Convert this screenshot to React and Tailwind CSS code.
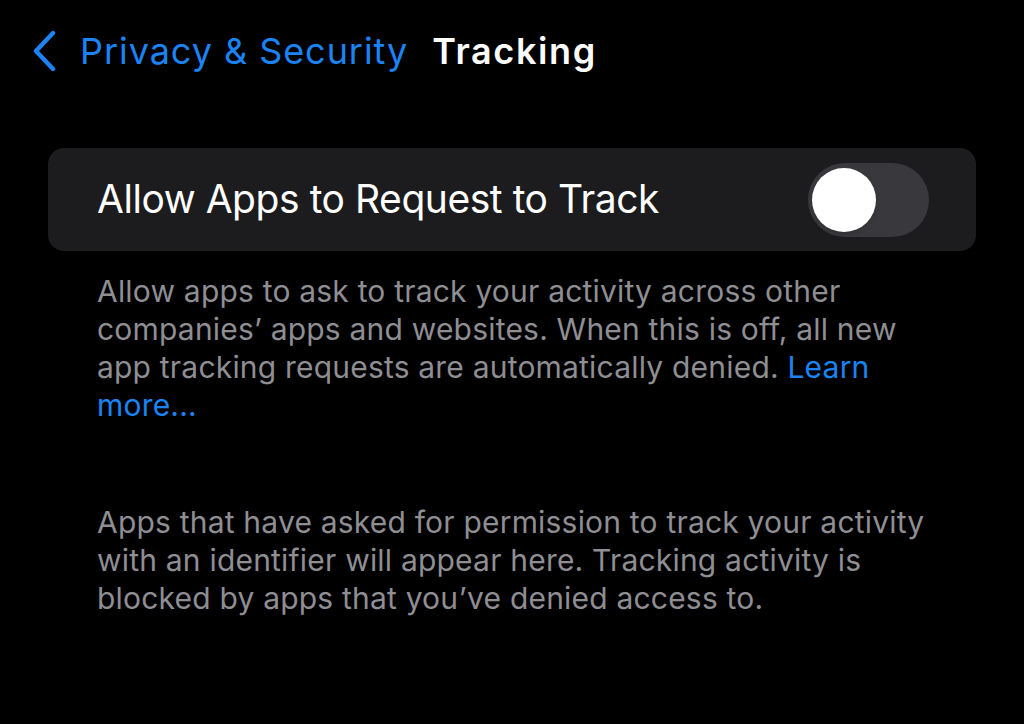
import React, { useState } from 'react'

export default function App() {
  const [allowTracking, setAllowTracking] = useState(false)

  return (
    <div className="min-h-[724px] w-[1024px] bg-black text-white font-['Inter',sans-serif] overflow-hidden">
      {/* Nav bar */}
      <header className="flex items-center h-[104px] pl-[31px] pb-[2px]">
        <button className="flex items-center text-[#1a84f5]">
          <svg width="28" height="42" viewBox="0 0 28 42" fill="none" className="mr-[21px]">
            <path d="M22 3 L5 21 L22 39" stroke="currentColor" strokeWidth="4.4" strokeLinecap="round" strokeLinejoin="round" />
          </svg>
          <span className="text-[36px] tracking-[0.95px]">Privacy &amp; Security</span>
        </button>
        <h1 className="ml-[24px] text-[36px] font-semibold tracking-[1.6px]">Tracking</h1>
      </header>

      <main className="px-[48px] pt-[44px]">
        {/* Toggle row */}
        <div className="flex items-center justify-between h-[103px] rounded-[16px] bg-[#1c1c1e] pl-[49px] pr-[47px]">
          <span className="text-[39px] tracking-[-0.45px]">Allow Apps to Request to Track</span>
          <button
            onClick={() => setAllowTracking(!allowTracking)}
            className={`relative h-[74px] w-[121px] rounded-full ${allowTracking ? 'bg-[#30d158]' : 'bg-[#39393d]'}`}
          >
            <span className={`absolute top-[5px] h-[64px] w-[64px] rounded-full bg-white shadow-md ${allowTracking ? 'left-[52px]' : 'left-[4px]'}`} />
          </button>
        </div>

        <p className="pl-[49px] pr-[31px] pt-[21px] text-[30px] leading-[38px] text-[#8e8e93] tracking-[0.2px]">
          Allow apps to ask to track your activity across other companies’ apps and websites. When this is off, all new app tracking requests are automatically denied. <span className="text-[#1a84f5]">Learn more...</span>
        </p>

        <p className="pl-[49px] pr-[31px] pt-[79px] text-[30px] leading-[38px] text-[#8e8e93] tracking-[0.2px]">
          Apps that have asked for permission to track your activity with an identifier will appear here. Tracking activity is blocked by apps that you’ve denied access to.
        </p>
      </main>
    </div>
  )
}
